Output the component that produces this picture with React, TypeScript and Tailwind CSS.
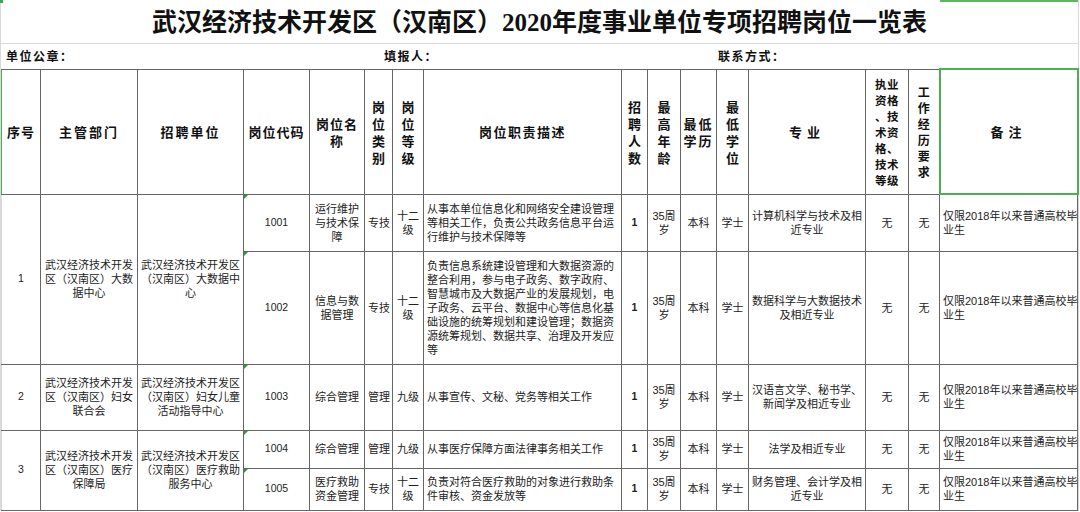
import React from "react";

const V = ({ lines }: { lines: string[] }) => (
  <div className="flex flex-col items-center">
    {lines.map((l, i) => (
      <span key={i} className="block whitespace-nowrap">
        {l}
      </span>
    ))}
  </div>
);

const L = ({ lines }: { lines: string[] }) => (
  <>
    {lines.map((l, i) => (
      <span key={i} className="block whitespace-nowrap">
        {l}
      </span>
    ))}
  </>
);

const Tri = () => (
  <span className="absolute left-0 top-0 h-0 w-0 border-t-[4px] border-r-[4px] border-t-[#2e9b3a] border-r-transparent" />
);

const thBase = "p-0 align-middle text-center font-bold text-[#111]";
const thB = thBase + " border border-[#666]";
const th13 = thB + " text-[13px] leading-[17px]";
const td =
  "border border-[#666] px-[3px] py-0 align-middle text-center text-[11px] leading-[14px] text-[#222]";
const tdl =
  "border border-[#666] px-[3px] py-0 align-middle text-left text-[11px] leading-[14px] text-[#222]";
const numBase = "px-[2px] py-0 align-middle text-center text-[10.5px] text-[#222]";
const num = numBase + " border border-[#666]";
const numFirst = numBase + " border-y border-r border-[#666] border-l border-l-[#d9d9d9]";

type Row = {
  code: string;
  name: string[];
  type: string;
  level: string[];
  desc: string[];
  major: string[];
};

const Cells = ({ r }: { r: Row }) => (
  <>
    <td className={num + " relative"}>
      <Tri />
      {r.code}
    </td>
    <td className={td}>
      <L lines={r.name} />
    </td>
    <td className={td + " whitespace-nowrap"}>{r.type}</td>
    <td className={td}>
      <L lines={r.level} />
    </td>
    <td className={tdl}>
      <L lines={r.desc} />
    </td>
    <td className={num + " font-bold"}>1</td>
    <td className={td}>
      <L lines={["35周", "岁"]} />
    </td>
    <td className={td}>本科</td>
    <td className={td}>学士</td>
    <td className={td}>
      <L lines={r.major} />
    </td>
    <td className={td}>无</td>
    <td className={td}>无</td>
    <td className={tdl}>
      <L lines={["仅限2018年以来普通高校毕", "业生"]} />
    </td>
  </>
);

const rows: Row[] = [
  {
    code: "1001",
    name: ["运行维护", "与技术保", "障"],
    type: "专技",
    level: ["十二", "级"],
    desc: [
      "从事本单位信息化和网络安全建设管理",
      "等相关工作，负责公共政务信息平台运",
      "行维护与技术保障等",
    ],
    major: ["计算机科学与技术及相", "近专业"],
  },
  {
    code: "1002",
    name: ["信息与数", "据管理"],
    type: "专技",
    level: ["十二", "级"],
    desc: [
      "负责信息系统建设管理和大数据资源的",
      "整合利用，参与电子政务、数字政府、",
      "智慧城市及大数据产业的发展规划，电",
      "子政务、云平台、数据中心等信息化基",
      "础设施的统筹规划和建设管理；数据资",
      "源统筹规划、数据共享、治理及开发应",
      "等",
    ],
    major: ["数据科学与大数据技术", "及相近专业"],
  },
  {
    code: "1003",
    name: ["综合管理"],
    type: "管理",
    level: ["九级"],
    desc: ["从事宣传、文秘、党务等相关工作"],
    major: ["汉语言文学、秘书学、", "新闻学及相近专业"],
  },
  {
    code: "1004",
    name: ["综合管理"],
    type: "管理",
    level: ["九级"],
    desc: ["从事医疗保障方面法律事务相关工作"],
    major: ["法学及相近专业"],
  },
  {
    code: "1005",
    name: ["医疗救助", "资金管理"],
    type: "专技",
    level: ["十二", "级"],
    desc: ["负责对符合医疗救助的对象进行救助条", "件审核、资金发放等"],
    major: ["财务管理、会计学及相", "近专业"],
  },
];

const widths = [39, 97, 106, 66, 55, 28, 31, 198, 26, 33, 36, 32, 117, 43, 31, 138];

export default function App() {
  return (
    <div className="relative w-[1080px] h-[512px] overflow-hidden bg-white font-['Liberation_Sans','Noto_Sans_CJK_SC',sans-serif]">
      <div className="absolute left-0 top-0 h-[3px] w-[3px] bg-[#3aa845]" />
      <div className="absolute left-[940px] top-0 h-[2px] w-[138px] bg-[#5cb85c]" />
      <div className="w-[1079px] border-l border-r border-[#d9d9d9]">
        <div className="flex h-[44px] items-center justify-center border-b border-[#d9d9d9] pt-[3px] font-['Liberation_Serif','Noto_Sans_CJK_SC',serif] text-[25px] font-bold text-[#111]">
          武汉经济技术开发区（汉南区）2020年度事业单位专项招聘岗位一览表
        </div>
        <div className="flex h-[24px] items-center font-['Noto_Sans_CJK_SC',sans-serif] text-[12px] font-bold tracking-[1.5px] text-[#111]">
          <span className="w-[383px] pl-[5px]">单位公章：</span>
          <span className="w-[334px]">填报人：</span>
          <span>联系方式：</span>
        </div>
        <table className="w-[1077px] table-fixed border-collapse font-['Liberation_Sans','Noto_Sans_CJK_SC',sans-serif]">
          <colgroup>
            {widths.map((w, i) => (
              <col key={i} width={w} />
            ))}
          </colgroup>
          <tbody>
            <tr className="h-[125px] font-['Noto_Sans_CJK_SC',sans-serif]">
              <th className={thBase + " text-[13px] tracking-[1px] border-y border-r border-[#666] border-l border-l-[#4caf50]"}>序号</th>
              <th className={th13 + " tracking-[2px]"}>主管部门</th>
              <th className={th13 + " tracking-[2px]"}>招聘单位</th>
              <th className={th13 + " tracking-[1px]"}>岗位代码</th>
              <th className={th13 + " tracking-[1px]"}>
                <V lines={["岗位名", "称"]} />
              </th>
              <th className={th13}>
                <V lines={["岗", "位", "类", "别"]} />
              </th>
              <th className={th13}>
                <V lines={["岗", "位", "等", "级"]} />
              </th>
              <th className={th13 + " tracking-[1.5px]"}>岗位职责描述</th>
              <th className={th13}>
                <V lines={["招", "聘", "人", "数"]} />
              </th>
              <th className={th13}>
                <V lines={["最", "高", "年", "龄"]} />
              </th>
              <th className={th13 + " tracking-[2px]"}>
                <V lines={["最低", "学历"]} />
              </th>
              <th className={th13}>
                <V lines={["最", "低", "学", "位"]} />
              </th>
              <th className={th13 + " tracking-[5px]"}>专业</th>
              <th className={thB + " text-[11.5px] leading-[16px] tracking-[0.5px]"}>
                <V lines={["执业", "资格", "、技", "术资", "格、", "技术", "等级"]} />
              </th>
              <th className={thB + " text-[12px] leading-[16px]"}>
                <V lines={["工", "作", "经", "历", "要", "求"]} />
              </th>
              <th className={thBase + " text-[13px] tracking-[5px] border-2 border-[#4caf50]"}>备注</th>
            </tr>
            <tr className="h-[57px]">
              <td rowSpan={2} className={numFirst}>1</td>
              <td rowSpan={2} className={td}>
                <L lines={["武汉经济技术开发", "区（汉南区）大数", "据中心"]} />
              </td>
              <td rowSpan={2} className={td}>
                <L lines={["武汉经济技术开发区", "（汉南区）大数据中", "心"]} />
              </td>
              <Cells r={rows[0]} />
            </tr>
            <tr className="h-[113px]">
              <Cells r={rows[1]} />
            </tr>
            <tr className="h-[66px]">
              <td className={numFirst}>2</td>
              <td className={td}>
                <L lines={["武汉经济技术开发", "区（汉南区）妇女", "联合会"]} />
              </td>
              <td className={td}>
                <L lines={["武汉经济技术开发区", "（汉南区）妇女儿童", "活动指导中心"]} />
              </td>
              <Cells r={rows[2]} />
            </tr>
            <tr className="h-[38px]">
              <td rowSpan={2} className={numFirst}>3</td>
              <td rowSpan={2} className={td}>
                <L lines={["武汉经济技术开发", "区（汉南区）医疗", "保障局"]} />
              </td>
              <td rowSpan={2} className={td}>
                <L lines={["武汉经济技术开发区", "（汉南区）医疗救助", "服务中心"]} />
              </td>
              <Cells r={rows[3]} />
            </tr>
            <tr className="h-[42px]">
              <Cells r={rows[4]} />
            </tr>
          </tbody>
        </table>
      </div>
    </div>
  );
}
